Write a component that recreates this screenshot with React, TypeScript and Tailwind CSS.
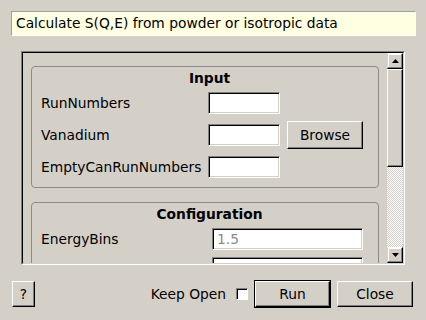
import React from "react";

const font = { fontFamily: '"DejaVu Sans", Verdana, sans-serif' };

function Field({ w, value }: { w: string; value?: string }) {
  return (
    <div
      className={`${w} h-[22px] border border-t-[#808080] border-l-[#808080] border-b-white border-r-white bg-white shadow-[inset_1px_1px_0_#000,inset_-1px_-1px_0_#d4d0c8] flex items-center px-[4px] text-[#8a8a8a] shrink-0`}
    >
      {value}
    </div>
  );
}

function Button({ label, cls }: { label: string; cls: string }) {
  return (
    <div
      className={`${cls} flex items-center justify-center border border-t-white border-l-white border-b-black border-r-black shadow-[inset_-1px_-1px_0_#808080] text-black shrink-0`}
    >
      {label}
    </div>
  );
}

function ArrowButton({ up }: { up: boolean }) {
  return (
    <div className="h-[16px] w-[16px] flex items-center justify-center border border-t-white border-l-[#d4d0c8] border-b-black border-r-black shadow-[inset_-1px_-1px_0_#808080,inset_1px_1px_0_#ffffff] bg-[#d4d0c8] shrink-0">
      <svg width="7" height="4" viewBox="0 0 7 4">
        {up ? <polygon points="3.5,0 7,4 0,4" fill="#000" /> : <polygon points="0,0 7,0 3.5,4" fill="#000" />}
      </svg>
    </div>
  );
}

function Row({ label, labelW, children }: { label: string; labelW: string; children: React.ReactNode }) {
  return (
    <div className="flex items-center h-[22px]">
      <div className={`${labelW} shrink-0 whitespace-nowrap`}>{label}</div>
      {children}
    </div>
  );
}

export default function App() {
  return (
    <div className="w-[426px] h-[320px] bg-[#d4d0c8] pt-[11px] text-[13.8px] text-black overflow-hidden" style={font}>
      {/* description */}
      <div className="ml-[11px] w-[405px] h-[25px] bg-[#ffffe1] border border-t-[#a0a0a0] border-l-[#a0a0a0] border-b-white border-r-white flex items-center pl-[4px] whitespace-nowrap">
        Calculate S(Q,E) from powder or isotropic data
      </div>

      {/* scroll area */}
      <div className="mt-[15px] ml-[21px] w-[384px] h-[214px] border border-t-[#808080] border-l-[#808080] border-b-white border-r-white">
        <div className="w-full h-full flex border border-t-black border-l-black border-b-[#d4d0c8] border-r-[#d4d0c8]">
          <div className="w-[364px] h-full overflow-hidden pt-[13px] pl-[8px]">
            <div className="w-[348px] border border-[#8c8c8c] rounded-[4px] pt-[3px] pb-[9px] pl-[9px]">
              <div className="text-center font-bold h-[17px] leading-[17px]">Input</div>
              <div className="mt-[5px] flex flex-col gap-[10px]">
                <Row label="RunNumbers" labelW="w-[167px]">
                  <Field w="w-[72px]" />
                </Row>
                <Row label="Vanadium" labelW="w-[167px]">
                  <Field w="w-[72px]" />
                  <Button label="Browse" cls="ml-[7px] w-[76px] h-[28px]" />
                </Row>
                <Row label="EmptyCanRunNumbers" labelW="w-[167px]">
                  <Field w="w-[72px]" />
                </Row>
              </div>
            </div>

            <div className="mt-[14px] w-[348px] border border-[#8c8c8c] rounded-[4px] pt-[3px] pb-[9px] pl-[9px]">
              <div className="text-center font-bold h-[17px] leading-[17px]">Configuration</div>
              <div className="mt-[5px] flex flex-col gap-[7px]">
                <Row label="EnergyBins" labelW="w-[171px]">
                  <Field w="w-[151px]" value="1.5" />
                </Row>
                <Row label="" labelW="w-[171px]">
                  <Field w="w-[151px]" />
                </Row>
              </div>
            </div>
          </div>

          {/* scrollbar */}
          <div className="w-[16px] h-full flex flex-col">
            <ArrowButton up />
            <div className="h-[98px] w-[16px] border border-t-white border-l-white border-b-black border-r-black shadow-[inset_-1px_-1px_0_#808080] bg-[#d4d0c8] shrink-0" />
            <div className="flex-1 bg-[repeating-conic-gradient(#ffffff_0%_25%,#d4d0c8_0%_50%)] bg-[length:2px_2px]" />
            <ArrowButton up={false} />
          </div>
        </div>
      </div>

      {/* buttons */}
      <div className="mt-[15px] h-[28px] flex items-center pl-[12px] pr-[13px]">
        <Button label="?" cls="w-[23px] h-[26px]" />
        <div className="ml-auto whitespace-nowrap">Keep Open</div>
        <div className="ml-[10px] w-[12px] h-[12px] bg-white border border-t-[#808080] border-l-[#808080] border-b-white border-r-white shadow-[inset_1px_1px_0_#000]" />
        <div className="ml-[6px] w-[77px] h-[28px] border border-black shrink-0">
          <Button label="Run" cls="w-full h-full" />
        </div>
        <Button label="Close" cls="ml-[6px] w-[76px] h-[26px]" />
      </div>
    </div>
  );
}
